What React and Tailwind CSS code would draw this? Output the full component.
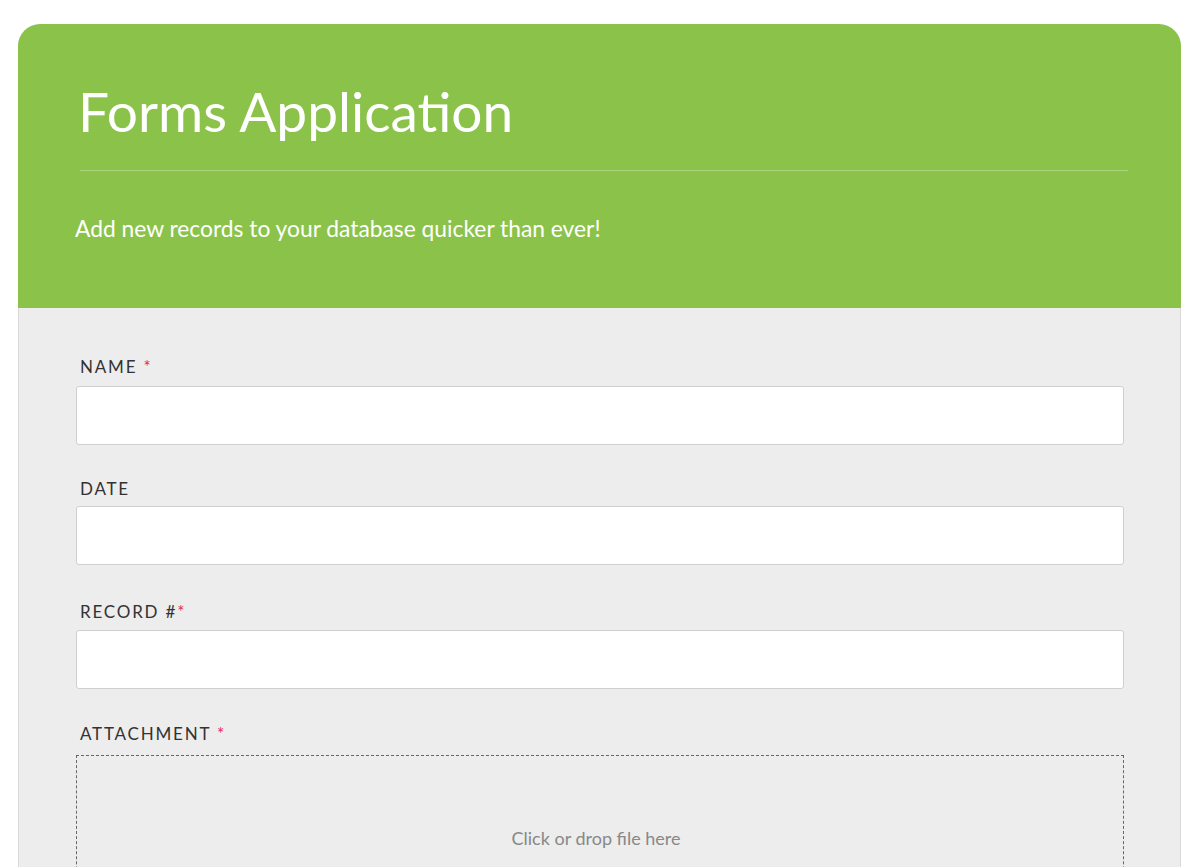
export default function App() {
  const labelCls =
    "block text-[17px] leading-none tracking-[1.8px] text-[#333] pl-1";
  const inputCls =
    "block w-full h-[59px] bg-white border border-[#cfcfcf] rounded-[3px] outline-none px-3";

  return (
    <div className="min-h-screen bg-white pt-6 px-[18px] font-['Lato',sans-serif]">
      <div className="w-[1163px]">
        {/* Header */}
        <div className="bg-[#8bc34a] rounded-t-[22px] h-[284px] pt-[60px] px-[58px]">
          <h1 className="text-white text-[55px] leading-none pl-[2px]">Forms Application</h1>
          <div className="mt-[31px] ml-[4px] h-px w-[1048px] bg-[#a9d47b]"></div>
          <p className="text-white text-[22.8px] leading-none mt-[46px] -ml-px">
            Add new records to your database quicker than ever!
          </p>
        </div>

        {/* Body */}
        <div className="bg-[#ededed] border-x border-[#d9d9d9] pl-[57px] pr-[56px] pt-[50px] pb-10">
          <label className={labelCls + " mb-[11px]"}>
            NAME <span className="text-[#e91e63]">*</span>
          </label>
          <input className={inputCls} type="text" />

          <label className={labelCls + " mt-[35px] mb-[9px]"}>DATE</label>
          <input className={inputCls} type="text" />

          <label className={labelCls + " mt-[38px] mb-[10px]"}>
            RECORD #<span className="text-[#e91e63]">*</span>
          </label>
          <input className={inputCls} type="text" />

          <label className={labelCls + " mt-[36px] mb-[13px]"}>
            ATTACHMENT <span className="text-[#e91e63]">*</span>
          </label>
          <div className="border border-dashed border-[#666] h-[160px] flex items-start justify-center pt-[69px]">
            <span className="text-[18px] text-[#888] -ml-2">Click or drop file here</span>
          </div>
        </div>
      </div>
    </div>
  );
}
